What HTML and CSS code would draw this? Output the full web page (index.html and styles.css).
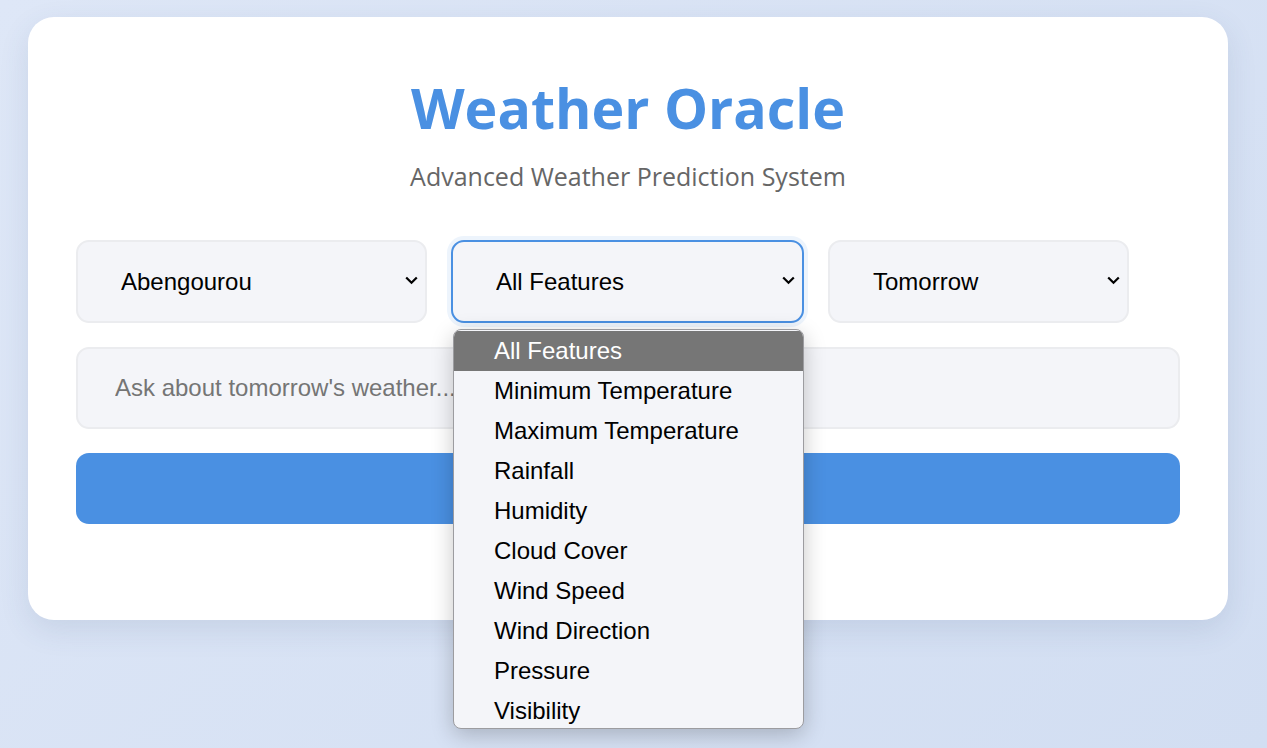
FILE: index.html
```html
<!DOCTYPE html>
<html lang="en">
<head>
<meta charset="utf-8">
<title>Weather Oracle</title>
<link rel="stylesheet" href="styles.css">
</head>
<body>
<main class="card">
  <header class="head">
    <h1 class="title">Weather Oracle</h1>
    <p class="subtitle">Advanced Weather Prediction System</p>
  </header>
  <div class="controls">
    <div class="select-wrap w-city">
      <select class="select">
        <option>Abengourou</option>
      </select>
      <svg class="chev" width="13" height="9" viewBox="0 0 13 9"><path d="M1.2 1.5 L6.5 6.8 L11.8 1.5" fill="none" stroke="#000" stroke-width="2.2"/></svg>
    </div>
    <div class="select-wrap w-feature">
      <select class="select focused">
        <option>All Features</option>
      </select>
      <svg class="chev" width="13" height="9" viewBox="0 0 13 9"><path d="M1.2 1.5 L6.5 6.8 L11.8 1.5" fill="none" stroke="#000" stroke-width="2.2"/></svg>
      <ul class="dropdown">
        <li class="opt active">All Features</li>
        <li class="opt">Minimum Temperature</li>
        <li class="opt">Maximum Temperature</li>
        <li class="opt">Rainfall</li>
        <li class="opt">Humidity</li>
        <li class="opt">Cloud Cover</li>
        <li class="opt">Wind Speed</li>
        <li class="opt">Wind Direction</li>
        <li class="opt">Pressure</li>
        <li class="opt">Visibility</li>
      </ul>
    </div>
    <div class="select-wrap w-day">
      <select class="select">
        <option>Tomorrow</option>
      </select>
      <svg class="chev" width="13" height="9" viewBox="0 0 13 9"><path d="M1.2 1.5 L6.5 6.8 L11.8 1.5" fill="none" stroke="#000" stroke-width="2.2"/></svg>
    </div>
  </div>
  <input class="query" type="text" placeholder="Ask about tomorrow's weather...">
  <button class="submit">Get Prediction</button>
</main>
</body>
</html>
```

FILE: styles.css
```css
* { box-sizing: border-box; }
html, body { height: 100%; }
body {
  margin: 0;
  background: linear-gradient(135deg, #dee7f7 0%, #d2def2 100%);
  font-family: "Liberation Sans", Arial, sans-serif;
  overflow: hidden;
}
.card {
  width: 1200px;
  margin: 17px 0 0 28px;
  background: #fff;
  border-radius: 26px;
  box-shadow: 0 10px 30px rgba(60, 80, 120, 0.12);
  padding: 51px 48px 96px;
}
.head { text-align: center; }
.title {
  margin: 0;
  font-family: "Open Sans", "Noto Sans", sans-serif;
  font-weight: 700;
  font-size: 55.5px;
  line-height: 80px;
  color: #4a90e2;
}
.subtitle {
  margin: 12px 0 0;
  font-family: "Open Sans", "Noto Sans", sans-serif;
  font-size: 25px;
  line-height: 32px;
  color: #666;
}
.controls {
  display: flex;
  gap: 24px;
  margin-top: 48px;
}
.select-wrap { position: relative; }
.w-city { width: 351px; }
.w-feature { width: 353px; }
.w-day { width: 301px; }
.select {
  appearance: none;
  -webkit-appearance: none;
  width: 100%;
  height: 83px;
  border: 2px solid #ebecef;
  border-radius: 13px;
  background: #f4f5f9;
  padding: 0 40px 0 43px;
  font-family: "Liberation Sans", Arial, sans-serif;
  font-size: 24px;
  color: #000;
  outline: none;
}
.select.focused {
  border-color: #4a90e2;
  box-shadow: 0 0 0 4px rgba(74, 144, 226, 0.1);
}
.chev {
  position: absolute;
  right: 9px;
  top: 36px;
  pointer-events: none;
}
.dropdown {
  position: absolute;
  z-index: 5;
  left: 2px;
  top: 89px;
  width: 351px;
  height: 400px;
  margin: 0;
  padding: 1px 0 0;
  list-style: none;
  background: #f4f5f9;
  border: 1px solid #9c9ca0;
  border-radius: 8px;
  overflow: hidden;
  box-shadow: 0 6px 22px rgba(0, 0, 0, 0.22);
}
.opt {
  height: 40px;
  line-height: 40px;
  padding-left: 40px;
  font-size: 24px;
  color: #000;
  white-space: nowrap;
}
.opt.active {
  background: #767676;
  color: #fff;
}
.query {
  display: block;
  width: 100%;
  height: 82px;
  margin-top: 24px;
  border: 2px solid #ebecef;
  border-radius: 13px;
  background: #f4f5f9;
  padding: 0 37px;
  font-family: "Liberation Sans", Arial, sans-serif;
  font-size: 24px;
  color: #000;
  outline: none;
}
.query::placeholder { color: #757575; }
.submit {
  display: block;
  width: 100%;
  height: 71px;
  margin-top: 24px;
  border: none;
  border-radius: 13px;
  background: #4a90e2;
  color: #fff;
  font-family: "Liberation Sans", Arial, sans-serif;
  font-size: 22px;
  font-weight: 700;
}
```
